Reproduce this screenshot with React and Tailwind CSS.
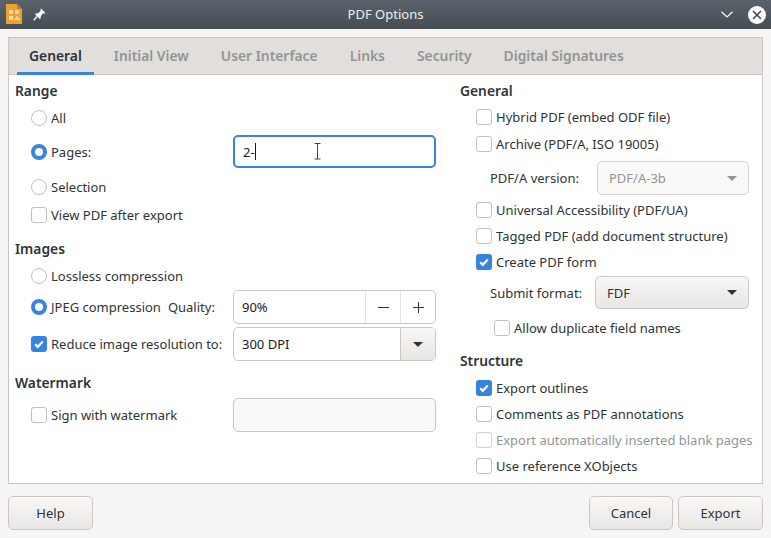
const Radio = ({ on }) =>
  on ? (
    <span className="w-4 h-4 rounded-full border-[4px] border-[#3584e4] bg-white shrink-0" />
  ) : (
    <span className="w-4 h-4 rounded-full border border-[#c5bfba] bg-white shrink-0" />
  );

const Check = ({ on, dim }) =>
  on ? (
    <span className="w-4 h-4 rounded-[3px] bg-[#3584e4] shrink-0 flex items-center justify-center">
      <svg width="12" height="12" viewBox="0 0 12 12" fill="none">
        <path d="M2.2 6.2 L4.8 8.8 L9.8 3.4" stroke="white" strokeWidth="2.2" />
      </svg>
    </span>
  ) : (
    <span className={`w-4 h-4 rounded-[3px] border shrink-0 bg-white ${dim ? 'border-[#d6d2ce]' : 'border-[#c5bfba]'}`} />
  );

const Arrow = ({ dim }) => (
  <svg width="10" height="5" viewBox="0 0 10 5">
    <path d="M0 0 H10 L5 5 Z" fill={dim ? '#929595' : '#2e3436'} />
  </svg>
);

function CheckRow({ label, on, dim, className = '' }) {
  return (
    <div className={`flex items-center h-5 gap-1 ${dim ? 'text-[#929595]' : ''} ${className}`}>
      <Check on={on} dim={dim} />
      <span className="whitespace-nowrap pt-[2px]">{label}</span>
    </div>
  );
}

function RadioRow({ label, on, className = '' }) {
  return (
    <div className={`flex items-center h-5 gap-1 ${className}`}>
      <Radio on={on} />
      <span className="pt-[2px]">{label}</span>
    </div>
  );
}

const Heading = ({ children, className = '' }) => (
  <div className={`h-5 leading-5 font-semibold text-[13.8px] ${className}`}>{children}</div>
);

const tabs = ['General', 'Initial View', 'User Interface', 'Links', 'Security', 'Digital Signatures'];

export default function App() {
  return (
    <div
      className="w-[771px] h-[538px] overflow-hidden flex flex-col bg-[#f6f5f4] text-[#2e3436] text-[13px]"
      style={{ fontFamily: '"Noto Sans", sans-serif' }}
    >
      {/* title bar */}
      <div className="h-[29px] shrink-0 flex items-center bg-gradient-to-b from-[#5a636c] to-[#454c54] text-white relative">
        <svg width="16" height="20" viewBox="0 0 16 20" className="ml-[6px] mt-[-2px]">
          <path d="M0 0 H11 L16 5 V20 H0 Z" fill="#f0a030" />
          <path d="M11 0 L16 5 H11 Z" fill="#c87a10" />
          <rect x="3" y="6" width="4" height="4" rx="1" fill="#fbe0b0" />
          <rect x="9" y="6" width="4" height="4" rx="2" fill="#fbe0b0" />
          <rect x="3" y="12" width="4" height="4" fill="#fbe0b0" />
          <path d="M11 11.5 L14 16 H8 Z" fill="#fbe0b0" />
        </svg>
        <svg width="13" height="13" viewBox="0 0 13 13" className="ml-[11px]">
          <path d="M8 0.5 L12.5 5 L11 5.8 L10.2 5.2 L7.8 8 L7.6 10.5 L6.5 10.8 L2.2 6.5 L2.5 5.4 L5 5.2 L7.8 2.8 L7.2 2 Z" fill="white" />
          <path d="M4 8.5 L0.8 12.2" stroke="white" strokeWidth="1.3" />
        </svg>
        <span className="absolute left-0 right-0 text-center text-[13px] text-[#eeeeec] pointer-events-none">PDF Options</span>
        <svg width="12" height="7" viewBox="0 0 12 7" className="ml-auto mr-[15px]" fill="none">
          <path d="M0.5 0.8 L6 6 L11.5 0.8" stroke="white" strokeWidth="1.2" />
        </svg>
        <span className="w-[18px] h-[18px] mr-[5px] rounded-full bg-white flex items-center justify-center">
          <svg width="10" height="10" viewBox="0 0 10 10" fill="none">
            <path d="M1 1 L9 9 M9 1 L1 9" stroke="#3d444c" strokeWidth="1.6" />
          </svg>
        </span>
      </div>

      {/* notebook */}
      <div className="mx-2 mt-2 h-[447px] border border-[#cdc7c2] bg-white flex flex-col">
        <div className="h-[37px] shrink-0 bg-[#e1dedb] border-b border-[#cdc7c2] flex gap-2 pl-2">
          {tabs.map((t, i) => (
            <div
              key={t}
              className={`h-[37px] px-3 pt-[2px] flex items-center font-semibold text-[13.85px] border-b-[3px] ${
                i === 0 ? 'border-[#3584e4] text-[#2e3436]' : 'border-transparent text-[#929595]'
              }`}
            >
              {t}
            </div>
          ))}
        </div>

        <div className="flex">
          {/* left column */}
          <div className="w-[451px] pl-[6px] shrink-0 flex flex-col">
            <Heading className="mt-[6px]">Range</Heading>
            <div className="pl-4 flex flex-col">
              <RadioRow label="All" className="mt-[7px]" />
              <div className="flex items-center justify-between mt-[7px] h-[33px] w-[405px]">
                <RadioRow label="Pages:" on />
                <div className="w-[203px] h-[33px] rounded-[5px] border-2 border-[#3584e4] flex items-center pl-[8px] relative text-[#1a1a1a]">
                  <span className="pt-[2px]">2-</span>
                  <span className="w-px h-[17px] bg-[#1a1a1a]" />
                  <svg width="7" height="17" viewBox="0 0 7 17" className="absolute left-[79px] top-[6px]" fill="none">
                    <path d="M0.5 0.5 H6.5 M3.5 0.5 V16 M0.5 16 H6.5" stroke="#444" strokeWidth="1" />
                  </svg>
                </div>
              </div>
              <RadioRow label="Selection" className="mt-[9px]" />
              <CheckRow label="View PDF after export" className="mt-2" />
            </div>

            <Heading className="mt-[14px]">Images</Heading>
            <div className="pl-4 flex flex-col">
              <RadioRow label="Lossless compression" className="mt-[7px]" />
              <div className="flex items-center justify-between mt-1 h-[34px] w-[405px]">
                <div className="flex items-center">
                  <RadioRow label="JPEG compression" on />
                  <span className="ml-[7px] pt-[2px]">Quality:</span>
                </div>
                <div className="w-[203px] h-[34px] rounded-[5px] border border-[#cdc7c2] flex items-center text-[#1a1a1a]">
                  <span className="flex-1 pl-[8px] pt-[2px]">90%</span>
                  <span className="w-[35px] h-full border-l border-[#e6e3e0] flex items-center justify-center">
                    <svg width="11" height="11" viewBox="0 0 11 11"><path d="M0 5.5 H11" stroke="#2e3436" /></svg>
                  </span>
                  <span className="w-[35px] h-full border-l border-[#e6e3e0] flex items-center justify-center">
                    <svg width="11" height="11" viewBox="0 0 11 11"><path d="M0 5.5 H11 M5.5 0 V11" stroke="#2e3436" /></svg>
                  </span>
                </div>
              </div>
              <div className="flex items-center justify-between mt-[3px] h-[34px] w-[405px]">
                <CheckRow label="Reduce image resolution to:" on />
                <div className="w-[203px] h-[34px] rounded-[5px] border border-[#cdc7c2] flex items-center text-[#1a1a1a] overflow-hidden">
                  <span className="flex-1 pl-[8px] pt-[2px]">300 DPI</span>
                  <span className="w-[35px] h-full border-l border-[#cdc7c2] bg-gradient-to-b from-[#f8f7f6] to-[#e9e7e5] flex items-center justify-center">
                    <Arrow />
                  </span>
                </div>
              </div>
            </div>

            <Heading className="mt-3">Watermark</Heading>
            <div className="pl-4 flex items-center justify-between mt-[5px] h-[34px] w-[421px]">
              <CheckRow label="Sign with watermark" />
              <div className="w-[203px] h-[34px] rounded-[5px] border border-[#cdc7c2] bg-[#faf9f8]" />
            </div>
          </div>

          {/* right column */}
          <div className="flex-1 flex flex-col">
            <Heading className="mt-[6px]">General</Heading>
            <div className="pl-4 flex flex-col">
              <CheckRow label="Hybrid PDF (embed ODF file)" className="mt-[6px]" />
              <CheckRow label="Archive (PDF/A, ISO 19005)" className="mt-[7px]" />
              <div className="flex items-center mt-[7px] h-[34px] pl-[14px] w-[273px] justify-between">
                <span className="pt-[2px]">PDF/A version:</span>
                <div className="w-[152px] h-[34px] rounded-[5px] border border-[#d6d2ce] bg-[#faf9f8] text-[#929595] flex items-center justify-between pl-[11px] pr-[11px]">
                  <span className="pt-[2px]">PDF/A-3b</span>
                  <Arrow dim />
                </div>
              </div>
              <CheckRow label="Universal Accessibility (PDF/UA)" className="mt-[5px]" />
              <CheckRow label="Tagged PDF (add document structure)" className="mt-[6px]" />
              <CheckRow label="Create PDF form" on className="mt-[6px]" />
              <div className="flex items-center mt-[4px] h-[33px] pl-[14px] w-[273px] justify-between">
                <span className="pt-[2px]">Submit format:</span>
                <div className="w-[154px] h-[33px] rounded-[5px] border border-[#cdc7c2] bg-gradient-to-b from-[#f8f7f6] to-[#e9e7e5] flex items-center justify-between pl-[11px] pr-[11px]">
                  <span className="pt-[2px]">FDF</span>
                  <Arrow />
                </div>
              </div>
              <CheckRow label="Allow duplicate field names" className="mt-[9px] ml-[18px]" />
            </div>
            <Heading className="mt-[13px]">Structure</Heading>
            <div className="pl-4 flex flex-col">
              <CheckRow label="Export outlines" on className="mt-[7px]" />
              <CheckRow label="Comments as PDF annotations" className="mt-[6px]" />
              <CheckRow label="Export automatically inserted blank pages" dim className="mt-[6px]" />
              <CheckRow label="Use reference XObjects" className="mt-[6px]" />
            </div>
          </div>
        </div>
      </div>

      {/* footer */}
      <div className="flex px-2 mt-3 gap-[5px]">
        <button className="w-[85px] h-[34px] pt-[2px] rounded-[5px] border border-[#cdc7c2] bg-gradient-to-b from-[#f8f7f6] to-[#e9e7e5]">Help</button>
        <button className="ml-auto w-[84px] h-[34px] pt-[2px] rounded-[5px] border border-[#cdc7c2] bg-gradient-to-b from-[#f8f7f6] to-[#e9e7e5]">Cancel</button>
        <button className="w-[85px] h-[34px] pt-[2px] rounded-[5px] border border-[#cdc7c2] bg-gradient-to-b from-[#f8f7f6] to-[#e9e7e5]">Export</button>
      </div>
    </div>
  );
}
